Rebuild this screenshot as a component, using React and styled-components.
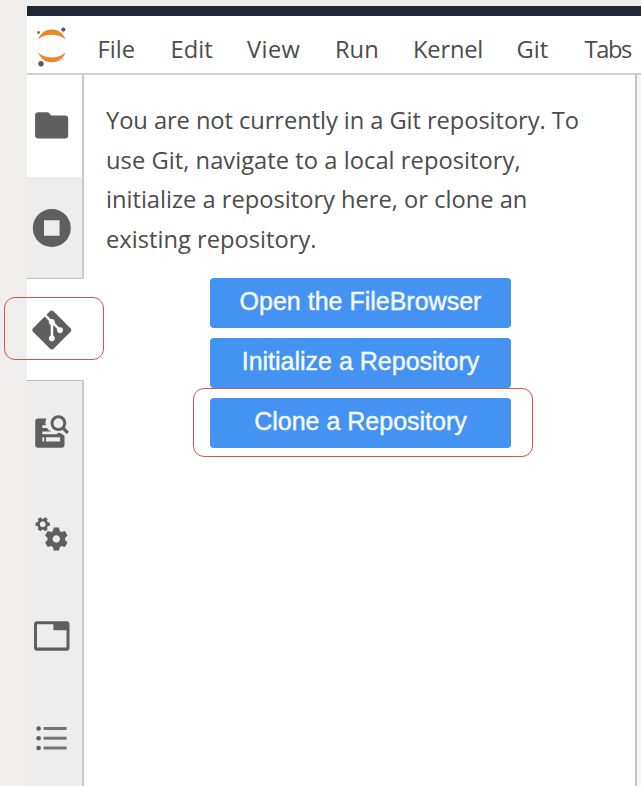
import React from 'react';
import styled, { createGlobalStyle } from 'styled-components';

const GlobalStyle = createGlobalStyle`
  * { box-sizing: border-box; }
  body { margin: 0; background: #efeeec; overflow: hidden; }
`;

const Page = styled.div`
  width: 641px;
  height: 786px;
  padding: 6px 0 0 27px;
  background: #efeeec;
  font-family: 'Open Sans', 'Noto Sans', sans-serif;
  color: #4c4c4c;
`;

const Shell = styled.div`
  height: 780px;
  display: flex;
  flex-direction: column;
  background: #fff;
`;

const TopStrip = styled.div`
  flex: none;
  height: 9.5px;
  background: #202833;
`;

const MenuBar = styled.nav`
  flex: none;
  height: 59.5px;
  display: flex;
  align-items: center;
  padding: 9px 0 0 10px;
  border-bottom: 2px solid #cfcfcf;
`;

const MenuItem = styled.span`
  flex: none;
  width: ${(p) => p.$width}px;
  font-size: 23.7px;
  line-height: 32px;
  letter-spacing: ${(p) => p.$track || 0}px;
  white-space: nowrap;
`;

const Logo = styled.svg`
  flex: none;
  width: 30px;
  height: 42px;
  margin: 0 30.5px 3px 0;
`;

const Body = styled.div`
  flex: 1;
  min-height: 0;
  display: flex;
`;

const SideBar = styled.aside`
  flex: none;
  width: 57px;
  display: flex;
  flex-direction: column;
  background: #ededed;
`;

const Tab = styled.div`
  flex: none;
  height: 102px;
  display: flex;
  align-items: center;
  padding-left: 4px;
  background: ${(p) => (p.$light ? '#fff' : '#ededed')};
  border-right: 2px solid ${(p) => (p.$open ? '#fff' : '#c9c9c9')};
  border-bottom: ${(p) => (p.$edge ? '1.5px solid #c0c0c0' : '0')};
  position: relative;
`;

const Icon = styled.svg`
  width: 42px;
  height: 42px;
  fill: #5f5f5f;
`;

const Panel = styled.main`
  flex: 1;
  padding: 26px 0 0 22px;
  border-right: 2px solid #c4c4c4;
`;

const Message = styled.p`
  margin: 0;
  font-size: 23.7px;
  line-height: 39.7px;
  white-space: nowrap;
`;

const Line = styled.span`
  display: block;
  letter-spacing: ${(p) => p.$track}px;
`;

const Actions = styled.div`
  width: 301px;
  margin: 18px 0 0 104px;
  display: flex;
  flex-direction: column;
  gap: 10px;
`;

const Button = styled.button`
  position: relative;
  height: 50px;
  padding: 0 0 3px;
  border: 0;
  border-radius: 4px;
  background: #4492f2;
  color: #f4f9ff;
  font: 25px/30px 'Liberation Sans', Arial, sans-serif;
  -webkit-text-stroke: 0.45px #f4f9ff;
`;

const Highlight = styled.i`
  position: absolute;
  top: ${(p) => p.$top}px;
  right: ${(p) => p.$right}px;
  bottom: ${(p) => p.$bottom}px;
  left: ${(p) => p.$left}px;
  border: 1.5px solid #cb5950;
  border-radius: 11px;
  z-index: 1;
`;

const Gutter = styled.div`
  flex: none;
  width: 4px;
  background: #f6f6f6;
`;

const menus = [
  { label: 'File', width: 73 },
  { label: 'Edit', width: 76.5 },
  { label: 'View', width: 88, track: 0.4 },
  { label: 'Run', width: 78 },
  { label: 'Kernel', width: 103.5, track: -0.2 },
  { label: 'Git', width: 68 },
  { label: 'Tabs', width: 56, track: -1.4 },
];

const JupyterLogo = () => (
  <Logo viewBox="0 0 30 42">
    <path fill="#ee8527" d="M1 13.5C4 6.5 9 3.6 14.8 3.6S26 6.8 28.5 13.5C24.6 10 20 8.8 14.8 8.8S5 10 1 13.5Z" />
    <path fill="#ee8527" d="M1 26.5C5 30.3 9.6 31.4 14.8 31.4s9.9-1.3 13.7-4.9C26 33.3 21 36.2 14.8 36.2S3.8 33.2 1 26.5Z" />
    <circle cx="26.3" cy="3.6" r="2.1" fill="#5b5660" />
    <circle cx="1.5" cy="6.4" r="1.5" fill="#77727b" />
    <circle cx="4" cy="37.8" r="2.7" fill="#5b5660" />
  </Logo>
);

const FolderIcon = () => (
  <Icon viewBox="0 0 42 42">
    <path d="M7.4 7.3h9.7l3.4 3.3h13.4q3.3 0 3.3 3.2v16.5q0 3.300-3.300 3.300H7.400q-3.300 0-3.300-3.300V10.600q0-3.300 3.300-3.300Z" />
  </Icon>
);

const RunningIcon = () => (
  <Icon viewBox="0 0 42 42">
    <path fillRule="evenodd" d="M20.8 2a19 19 0 1 0 0 38a19 19 0 1 0 0-38ZM13 13.2h15.6v15.6H13Z" />
  </Icon>
);

const GitIcon = () => (
  <Icon viewBox="-.8 -.9 25.85 25.85">
    <path d="M23.546 10.93L13.067.452c-.604-.603-1.582-.603-2.188 0L8.708 2.627l2.76 2.76c.645-.215 1.379-.07 1.889.441.516.515.658 1.258.438 1.9l2.658 2.66c.645-.223 1.387-.078 1.9.435.721.72.721 1.884 0 2.604-.719.719-1.881.719-2.6 0-.539-.541-.674-1.337-.404-1.996L12.86 8.955v6.525c.176.086.342.203.488.348.713.721.713 1.883 0 2.6-.719.721-1.889.721-2.609 0-.719-.719-.719-1.879 0-2.598.182-.18.387-.316.605-.406V8.835c-.217-.091-.424-.222-.6-.401-.545-.545-.676-1.342-.396-2.009L7.636 3.7.45 10.881c-.6.605-.6 1.584 0 2.189l10.48 10.477c.604.604 1.582.604 2.186 0l10.43-10.43c.605-.603.605-1.582 0-2.187" />
  </Icon>
);

const InspectorIcon = () => (
  <Icon viewBox="0 0 42 42">
    <path
      fillRule="evenodd"
      d="M7 7.5h8.400q-1.600 3.200-.6 6.800H11.300v2.700h4.600q1.500 2.600 4.400 3.500H11.300v2.700h14.200q1.200-2.200 4-1.200l4 2.800V34q0 2.800-2.800 2.800H7q-2.800 0-2.800-2.800V10.300Q4.200 7.500 7 7.500ZM11.300 26.300h2v4.200h-2ZM15 26.300h14.100v4.200H15Z"
    />
    <circle cx="27.400" cy="12.200" r="6.400" fill="none" stroke="#5f5f5f" strokeWidth="3" />
    <path d="M31.500 16.500l5.300 5.300" fill="none" stroke="#5f5f5f" strokeWidth="3.200" />
  </Icon>
);

const Gear = ({ cx, cy, r, hole, tooth }) => (
  <g transform={`translate(${cx} ${cy})`}>
    <circle r={(r + hole) / 2} fill="none" stroke="#5f5f5f" strokeWidth={r - hole} />
    {[0, 60, 120, 180, 240, 300].map((a) => (
      <path key={a} transform={`rotate(${a})`} d={`M${-tooth} ${-r + 1}L${-tooth * 0.75} ${-r * 1.3}H${tooth * 0.75}L${tooth} ${-r + 1}Z`} />
    ))}
  </g>
);

const GearsIcon = () => (
  <Icon viewBox="0 0 42 42">
    <g transform="rotate(30 11.7 11.2)">
      <Gear cx={11.7} cy={11.2} r={5.5} hole={2.9} tooth={2.1} />
    </g>
    <Gear cx={25.3} cy={26} r={8.800} hole={3.700} tooth={3.500} />
  </Icon>
);

const WindowIcon = () => (
  <Icon viewBox="0 0 42 42">
    <path
      fillRule="evenodd"
      d="M6 6.200h29.500q3 0 3 3v23.500q0 3-3 3H6q-3 0-3-3V9.200q0-3 3-3ZM6 9.300v23.300h29.500V15.300H22.400V9.300Z"
    />
  </Icon>
);

const ListIcon = () => (
  <Icon viewBox="0 0 42 42">
    {[11.5, 21.200, 31].map((y) => (
      <g key={y}>
        <circle cx="7.600" cy={y} r="2.300" />
        <rect x="12.600" y={y - 1.5} width="23" height="3" fill="#747474" />
      </g>
    ))}
  </Icon>
);

export default function App() {
  return (
    <Page>
      <GlobalStyle />
      <Shell>
        <TopStrip />
        <MenuBar>
          <JupyterLogo />
          {menus.map((m) => (
            <MenuItem key={m.label} $width={m.width} $track={m.track}>{m.label}</MenuItem>
          ))}
        </MenuBar>
        <Body>
          <SideBar>
            <Tab $light><FolderIcon /></Tab>
            <Tab $edge><RunningIcon /></Tab>
            <Tab $light $open $edge>
              <GitIcon />
              <Highlight $top={18} $right={-22} $bottom={20} $left={-23} />
            </Tab>
            <Tab><InspectorIcon /></Tab>
            <Tab><GearsIcon /></Tab>
            <Tab><WindowIcon /></Tab>
            <Tab><ListIcon /></Tab>
          </SideBar>
          <Panel>
            <Message>
              <Line $track={-0.07}>You are not currently in a Git repository. To</Line>
              <Line $track={0.04}>use Git, navigate to a local repository,</Line>
              <Line $track={-0.01}>initialize a repository here, or clone an</Line>
              <Line $track={0.01}>existing repository.</Line>
            </Message>
            <Actions>
              <Button>Open the FileBrowser</Button>
              <Button>Initialize a Repository</Button>
              <Button>
                Clone a Repository
                <Highlight $top={-10} $right={-22} $bottom={-9} $left={-17} />
              </Button>
            </Actions>
          </Panel>
          <Gutter />
        </Body>
      </Shell>
    </Page>
  );
}
